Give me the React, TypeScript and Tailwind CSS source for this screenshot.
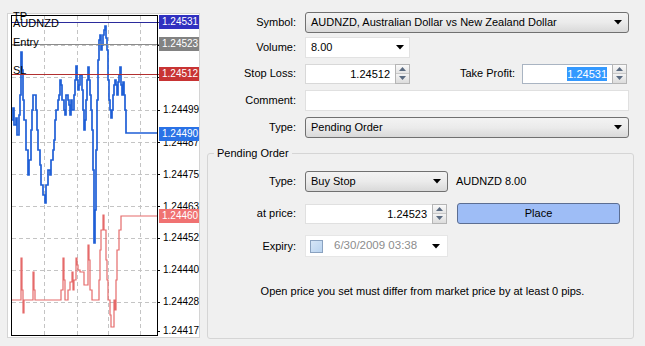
import React from "react";

const blue: [number, number][] = [
  [12,120],[13,108],[14,125],[16,118],[17,135],[19,115],[20,95],[21,52],[22,70],[23,100],[24,120],[26,150],[28,175],[29,160],[31,130],[32,110],[33,95],[35,95],[36,110],[37,130],[38,150],[40,165],[41,185],[43,195],[45,203],[46,185],[48,170],[50,175],[51,160],[53,150],[54,140],[55,120],[56,110],[58,100],[59,95],[60,80],[61,85],[62,100],[64,110],[65,115],[66,95],[68,100],[69,105],[70,115],[71,100],[72,110],[74,95],[75,80],[76,66],[77,80],[78,90],[79,85],[80,75],[82,90],[83,110],[84,130],[85,120],[86,100],[87,80],[88,67],[89,80],[90,95],[91,110],[92,130],[93,170],[94,243],[95,210],[96,150],[97,100],[98,60],[99,40],[100,35],[101,50],[102,45],[103,35],[104,30],[105,26],[106,38],[107,50],[108,80],[109,100],[110,110],[111,118],[112,110],[113,95],[114,85],[115,80],[116,85],[117,95],[118,82],[119,75],[120,67],[121,85],[122,95],[123,82],[124,95],[125,110],[126,110],[126,133],[157,133],
];
const red: [number, number][] = [
  [12,300],[20,300],[21,258],[22,290],[23,313],[24,300],[31,300],[33,272],[34,290],[35,300],[60,300],[61,290],[63,258],[64,280],[65,300],[67,300],[68,290],[70,282],[72,272],[73,290],[74,280],[76,258],[77,265],[78,270],[80,272],[82,272],[84,285],[86,285],[88,245],[89,260],[90,290],[92,300],[98,300],[99,280],[100,250],[101,230],[103,215],[104,230],[106,260],[107,280],[108,300],[110,315],[111,327],[113,327],[114,300],[115,310],[116,280],[117,250],[119,230],[121,216],[123,216],[157,216],
];

function stepPts(p: [number, number][]) {
  const out: string[] = [];
  for (let i = 0; i < p.length; i++) {
    if (i > 0) out.push(`${p[i][0]},${p[i - 1][1]}`);
    out.push(`${p[i][0]},${p[i][1]}`);
  }
  return out.join(" ");
}

const axis = [
  { v: "1.24499", y: 110 },
  { v: "1.24487", y: 143 },
  { v: "1.24475", y: 175 },
  { v: "1.24463", y: 207 },
  { v: "1.24452", y: 238 },
  { v: "1.24440", y: 270 },
  { v: "1.24428", y: 302 },
  { v: "1.24417", y: 331 },
];

function Tri() {
  return (
    <svg width="8" height="5" viewBox="0 0 8 5" className="block">
      <path d="M0 0H8L4 4.5Z" fill="#000" />
    </svg>
  );
}

function Spinner() {
  return (
    <div className="flex flex-col w-[15px] h-full border border-[#b5b5b5] bg-[#f4f4f4]">
      <div className="flex-1 flex items-center justify-center border-b border-[#c8c8c8] bg-linear-to-b from-[#fafafa] to-[#e4e4e4]">
        <svg width="7" height="4" viewBox="0 0 7 4"><path d="M0 4H7L3.5 0Z" fill="#5a6a80" /></svg>
      </div>
      <div className="flex-1 flex items-center justify-center bg-linear-to-b from-[#f4f4f4] to-[#dcdcdc]">
        <svg width="7" height="4" viewBox="0 0 7 4"><path d="M0 0H7L3.5 4Z" fill="#5a6a80" /></svg>
      </div>
    </div>
  );
}

function GradSelect({ text, w }: { text: string; w: string }) {
  return (
    <div className={`${w} h-[21px] flex items-center justify-between pl-[5px] pr-[6px] rounded-[3px] border border-[#707070] bg-linear-to-b from-[#f3f3f3] via-[#ebebeb] to-[#d9d9d9]`}>
      <span className="whitespace-nowrap">{text}</span>
      <Tri />
    </div>
  );
}

export default function App() {
  return (
    <div
      className="w-[645px] h-[346px] bg-[#f0f0f0] flex text-[11px] text-black overflow-hidden whitespace-nowrap"
      style={{ fontFamily: '"Liberation Sans", Arial, sans-serif' }}
    >
      {/* Chart panel */}
      <div className="ml-[7px] mt-[13px] w-[193px] h-[325px] border border-[#d4d4d4] bg-white relative shrink-0">
        <svg className="absolute left-[-1px] top-[-1px]" width="193" height="325" viewBox="7 13 193 325">
          {[44, 77, 108, 140].map((x) => (
            <line key={x} x1={x + 0.5} y1={16} x2={x + 0.5} y2={335} stroke="#c4c4c4" strokeDasharray="4 3" />
          ))}
          {[45, 77, 110, 142, 174, 206, 238, 270, 302].map((y) => (
            <line key={y} x1={12} y1={y + 0.5} x2={157} y2={y + 0.5} stroke="#c4c4c4" strokeDasharray="4 3" />
          ))}
          {[45, 77, 110, 142, 174, 206, 238, 270, 302, 331].map((y) => (
            <line key={"t" + y} x1={157} y1={y + 0.5} x2={160} y2={y + 0.5} stroke="#000" />
          ))}
          <polyline points={stepPts(red)} fill="none" stroke="#e56a6a" strokeWidth="1.2" />
          <polyline points={stepPts(blue)} fill="none" stroke="#1f5fd6" strokeWidth="1.7" />
          <line x1={12} y1={22.5} x2={159} y2={22.5} stroke="#2b2b9c" />
          <line x1={12} y1={44.5} x2={159} y2={44.5} stroke="#8c8c8c" />
          <line x1={12} y1={74.5} x2={159} y2={74.5} stroke="#b23030" />
          <rect x={11.5} y={15.5} width={146} height={320} fill="none" stroke="#000" />
        </svg>
        <div className="absolute left-[5px] top-[-3px] text-[11px] leading-none">TP</div>
        <div className="absolute left-[5px] top-[4px] text-[11px] leading-none">AUDNZD</div>
        <div className="absolute left-[5px] top-[23px] text-[11px] leading-none">Entry</div>
        <div className="absolute left-[5px] top-[51px] text-[11px] leading-none">SL</div>
        {axis.map((a) => (
          <div key={a.v} className="absolute left-[155px] text-[10px] leading-none" style={{ top: a.y - 13 - 6 }}>
            {a.v}
          </div>
        ))}
        {[
          { v: "1.24531", y: 22, c: "bg-[#3030c0]" },
          { v: "1.24523", y: 44, c: "bg-[#828282]" },
          { v: "1.24512", y: 74, c: "bg-[#c83434]" },
          { v: "1.24490", y: 134, c: "bg-[#2a72e6]" },
          { v: "1.24460", y: 216, c: "bg-[#f07272]" },
        ].map((l) => (
          <div
            key={l.v}
            className={`absolute left-[151px] w-[40px] h-[14px] ${l.c} text-white text-[10px] leading-[14px] pl-[3px]`}
            style={{ top: l.y - 13 - 8 }}
          >
            {l.v}
          </div>
        ))}
      </div>

      {/* Form */}
      <div className="ml-[7px] w-[430px] flex flex-col">
        <div className="mt-[12px] flex items-center h-[21px]">
          <div className="w-[90px] text-right pr-px">Symbol:</div>
          <div className="ml-[8px]">
            <GradSelect text="AUDNZD, Australian Dollar vs New Zealand Dollar" w="w-[324px]" />
          </div>
        </div>
        <div className="mt-[4px] flex items-center h-[21px]">
          <div className="w-[90px] text-right pr-px">Volume:</div>
          <div className="ml-[8px] w-[105px] h-[21px] bg-white border border-[#e2e2e2] flex items-center justify-between pl-[5px] pr-[5px]">
            <span>8.00</span>
            <Tri />
          </div>
        </div>
        <div className="mt-[5px] flex items-center h-[21px]">
          <div className="w-[90px] text-right pr-px">Stop Loss:</div>
          <div className="ml-[8px] flex h-[20px]">
            <div className="w-[90px] bg-white border border-[#d8d8d8] border-r-0 text-right pr-[5px] leading-[18px]">1.24512</div>
            <Spinner />
          </div>
          <div className="ml-[4px] w-[101px] text-right">Take Profit:</div>
          <div className="ml-[7px] flex h-[20px]">
            <div className="w-[90px] bg-white border border-[#a9b4c2] border-r-0 flex justify-end items-center pr-[5px]">
              <span className="bg-[#3399ff] text-white leading-[14px]">1.24531</span>
            </div>
            <Spinner />
          </div>
        </div>
        <div className="mt-[6px] flex items-center h-[21px]">
          <div className="w-[90px] text-right pr-px">Comment:</div>
          <div className="ml-[8px] w-[324px] h-[21px] bg-white border border-[#e0e0e0]" />
        </div>
        <div className="mt-[6px] flex items-center h-[21px]">
          <div className="w-[90px] text-right pr-px">Type:</div>
          <div className="ml-[8px]">
            <GradSelect text="Pending Order" w="w-[324px]" />
          </div>
        </div>

        <div className="mt-[15px] w-[427px] h-[186px] border border-[#d5d5d5] rounded-[3px] relative flex flex-col">
          <div className="absolute left-[6px] top-[-8px] px-[3px] bg-[#f0f0f0] leading-[14px]">Pending Order</div>
          <div className="mt-[17px] flex items-center h-[21px]">
            <div className="w-[89px] text-right pr-px">Type:</div>
            <div className="ml-[8px]">
              <GradSelect text="Buy Stop" w="w-[143px]" />
            </div>
            <div className="ml-[8px]">AUDNZD 8.00</div>
          </div>
          <div className="mt-[11px] flex items-center h-[21px]">
            <div className="w-[89px] text-right pr-px">at price:</div>
            <div className="ml-[8px] flex h-[20px]">
              <div className="w-[127px] bg-white border border-[#e0e0e0] border-r-0 text-right pr-[5px] leading-[18px]">1.24523</div>
              <Spinner />
            </div>
            <div className="ml-[10px] w-[163px] h-[21px] rounded-[3px] border border-[#5c6e92] bg-[#9ebdf6] flex items-center justify-center">
              Place
            </div>
          </div>
          <div className="mt-[11px] flex items-center h-[22px]">
            <div className="w-[89px] text-right pr-px">Expiry:</div>
            <div className="ml-[8px] w-[143px] h-[22px] bg-white border border-[#e6e6e6] flex items-center pl-[4px] pr-[7px] overflow-hidden">
              <div className="w-[13px] h-[13px] border border-[#8aa2c0] bg-linear-to-br from-[#d6e6f7] to-[#b9d3ef] shrink-0" />
              <span className="ml-[11px] text-[#8c8c8c] text-[11.5px] w-[86px] overflow-hidden whitespace-nowrap">6/30/2009 03:38</span>
              <span className="ml-auto"><Tri /></span>
            </div>
          </div>
          <div className="mt-[26px] text-center pl-[4px]">
            Open price you set must differ from market price by at least 0 pips.
          </div>
        </div>
      </div>
    </div>
  );
}
